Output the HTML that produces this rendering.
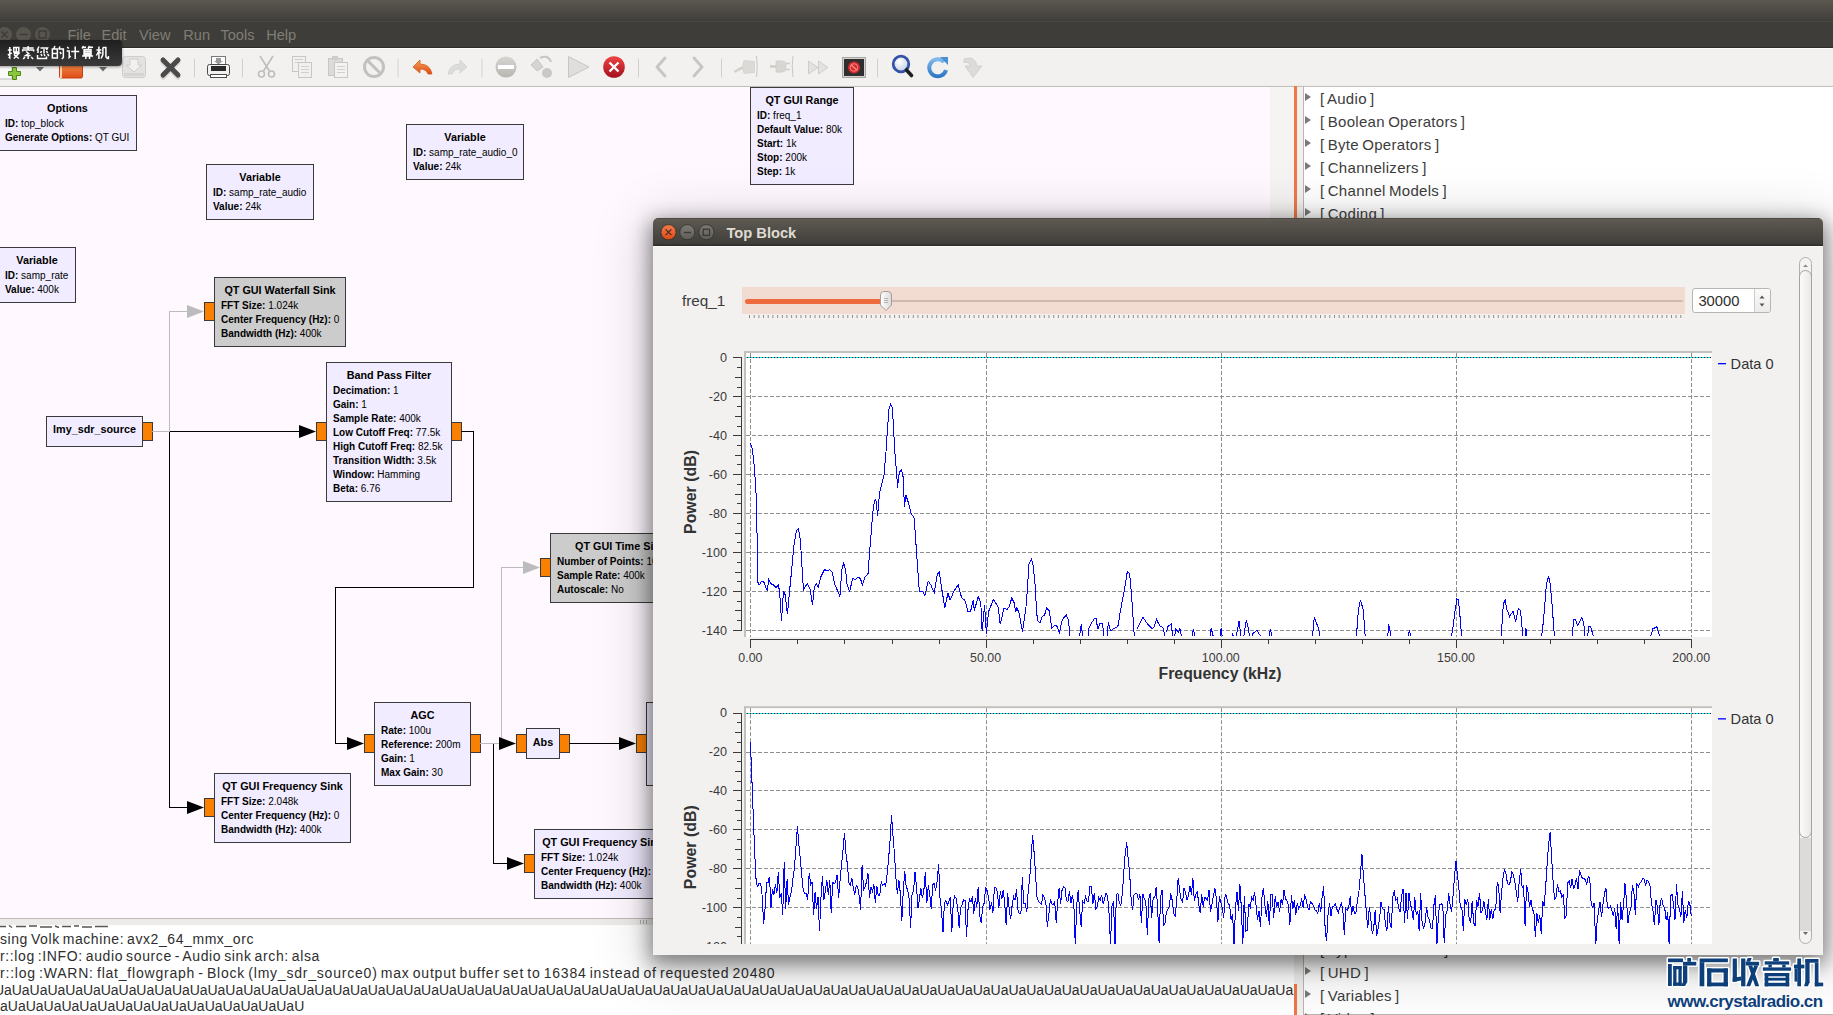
<!DOCTYPE html>
<html><head><meta charset="utf-8"><title>GRC</title>
<style>
*{box-sizing:border-box;margin:0;padding:0}
html,body{width:1833px;height:1015px;overflow:hidden;background:#f2f1f0;font-family:"Liberation Sans",sans-serif}
.a{position:absolute}
.blk{position:absolute;border:1px solid #3a3a3a;background:#f1ecff;color:#000}
.blk.dis{background:#cccccc}
.blk .t{position:absolute;left:0;right:0;text-align:center;font-weight:bold;font-size:10.8px;white-space:nowrap}
.blk .p{position:absolute;left:6px;font-size:10px;white-space:nowrap}
.blk .p b{font-weight:bold}
.port{position:absolute;background:#f98000;border:1px solid #3a3a3a;width:11px;height:19px}
.menu{position:absolute;top:26.8px;font-size:14.6px;color:#807d76;white-space:nowrap}
.tree{position:absolute;left:1320px;font-size:15px;letter-spacing:0.3px;word-spacing:-1.2px;color:#3c3c3c;white-space:nowrap}
.tri{position:absolute;left:1305px;width:0;height:0;border-top:4.5px solid transparent;border-bottom:4.5px solid transparent;border-left:6.5px solid #7a7a7a}
.log{position:absolute;font-size:14px;color:#2e2e2e;white-space:nowrap;letter-spacing:0.5px;word-spacing:-1.5px}
</style></head><body>

<div class="a" style="left:0;top:0;width:1833px;height:21px;background:linear-gradient(#5b5750,#403e3a)"></div>
<div class="a" style="left:0;top:21px;width:1833px;height:1px;background:#4b4945"></div>
<div class="a" style="left:0;top:22px;width:1833px;height:25px;background:#3e3d39"></div>
<div class="a" style="left:0;top:47px;width:1833px;height:1px;background:#2e2c29"></div>
<div class="a" style="left:-3.0px;top:27px;width:15px;height:15px;border-radius:50%;background:#57544e"></div>
<div class="a" style="left:16.0px;top:27px;width:15px;height:15px;border-radius:50%;background:#57544e"></div>
<div class="a" style="left:35.0px;top:27px;width:15px;height:15px;border-radius:50%;background:#57544e"></div>
<svg class="a" style="left:0;top:26px" width="60" height="18"><g stroke="#3a3834" stroke-width="1.3" fill="none"><path d="M1.5 5.5 L7.5 11.5 M7.5 5.5 L1.5 11.5"/><path d="M19.5 8.5 H27.5"/><rect x="39" y="5" width="7" height="7"/></g></svg>
<div class="menu" style="left:67.4px">File</div>
<div class="menu" style="left:101.5px">Edit</div>
<div class="menu" style="left:139.1px">View</div>
<div class="menu" style="left:183.3px">Run</div>
<div class="menu" style="left:220.4px">Tools</div>
<div class="menu" style="left:266.2px">Help</div>
<div class="a" style="left:0;top:48px;width:1833px;height:38px;background:linear-gradient(#fbfbfa 0px,#fbfbfa 1px,#f2f1f0 1px,#f2f1f0 37px,#eae9e7 38px)"></div>
<div class="a" style="left:0;top:86px;width:1833px;height:1px;background:#c3c0bb"></div>
<svg class="a" style="left:0;top:0" width="1000" height="87" viewBox="0 0 1000 87">
<defs>
<linearGradient id="gOr" x1="0" y1="0" x2="0" y2="1"><stop offset="0" stop-color="#f5a25a"/><stop offset="1" stop-color="#df4a17"/></linearGradient>
<linearGradient id="gRed" x1="0" y1="0" x2="0" y2="1"><stop offset="0" stop-color="#ef4444"/><stop offset="1" stop-color="#a3101c"/></linearGradient>
<linearGradient id="gGr" x1="0" y1="0" x2="0" y2="1"><stop offset="0" stop-color="#d7d5d2"/><stop offset="1" stop-color="#b9b6b2"/></linearGradient>
<linearGradient id="gBl" x1="0" y1="0" x2="0" y2="1"><stop offset="0" stop-color="#7fb8ea"/><stop offset="1" stop-color="#2f78c8"/></linearGradient>
<radialGradient id="gMag" cx="0.4" cy="0.35" r="0.6"><stop offset="0" stop-color="#ffffff"/><stop offset="1" stop-color="#c9d4e6"/></radialGradient>
</defs>
<rect x="194" y="59" width="1" height="18" fill="#d3d0cc"/>
<rect x="242" y="59" width="1" height="18" fill="#d3d0cc"/>
<rect x="397.5" y="59" width="1" height="18" fill="#d3d0cc"/>
<rect x="481.5" y="59" width="1" height="18" fill="#d3d0cc"/>
<rect x="638" y="59" width="1" height="18" fill="#d3d0cc"/>
<rect x="721" y="59" width="1" height="18" fill="#d3d0cc"/>
<rect x="877" y="59" width="1" height="18" fill="#d3d0cc"/>
<rect x="-4" y="60" width="16" height="19" fill="#fafafa" stroke="#bdbdbd" stroke-width="1"/>
<path d="M12.5 67.5 h4 v4 h4 v4 h-4 v4 h-4 v-4 h-4 v-4 h4z" fill="#8cc63e" stroke="#4e8a16" stroke-width="1"/>
<path d="M36 67 h8 l-4 4.5z" fill="#6b6b6b"/>
<path d="M99 67 h8 l-4 4.5z" fill="#6b6b6b"/>
<rect x="59.5" y="58" width="23" height="20" rx="1.5" fill="url(#gOr)" stroke="#c8400e" stroke-width="1"/>
<rect x="60" y="58" width="2" height="20" fill="#f7d0b0"/>
<rect x="122.5" y="56.5" width="23" height="21" rx="3" fill="#e3e2e0" stroke="#cfcdca"/>
<path d="M130 59 h8 v6 h4 l-8 7 l-8 -7 h4z" fill="#f2f1ef" stroke="#cfcdca"/>
<rect x="124" y="73" width="20" height="3" fill="#d6d4d1"/>
<path d="M163 61 L178 76 M178 61 L163 76" stroke="#b8b6b3" stroke-width="5" stroke-linecap="round" transform="translate(0 1)" opacity="0.5"/><path d="M163 60 L178 75 M178 60 L163 75" stroke="#4a4a4a" stroke-width="5" stroke-linecap="round"/>
<rect x="211.5" y="56.5" width="14" height="9" fill="#fff" stroke="#7a7a7a"/>
<path d="M216 58 h5 v3 h2 l-4.5 3.5 l-4.5 -3.5 h2z" fill="#9a9a9a"/>
<rect x="207.5" y="64.5" width="22" height="11" rx="2" fill="#f0f0f0" stroke="#4a4a4a"/>
<rect x="211" y="66" width="15" height="5" fill="#2a2a2a"/>
<rect x="210.5" y="74.5" width="16" height="3" fill="#fff" stroke="#4a4a4a"/>
<g stroke="#bfbdbb" stroke-width="1.6" fill="none"><path d="M260 56 L270 72 M273 56 L263 72"/><circle cx="261.5" cy="74" r="3"/><circle cx="271.5" cy="74" r="3"/></g>
<g fill="#f1f0ef" stroke="#c9c7c4"><rect x="292.5" y="56.5" width="13" height="15"/><rect x="298.5" y="62.5" width="13" height="15"/></g>
<g stroke="#d2d0cd"><path d="M301 66.5h8M301 69.5h8M301 72.5h8M295 59.5h8M295 62.5h3"/></g>
<rect x="328.5" y="58.5" width="14" height="17" fill="#dddbd9" stroke="#c9c7c4"/>
<rect x="332" y="56" width="6" height="4" fill="#cfcdca"/>
<rect x="334.5" y="62.5" width="13" height="15" fill="#f3f2f1" stroke="#c9c7c4"/>
<g stroke="#d2d0cd"><path d="M337 66.5h8M337 69.5h8M337 72.5h8"/></g>
<circle cx="374" cy="67" r="9.5" fill="none" stroke="#c3c1bf" stroke-width="3"/>
<path d="M368 61 L380 73" stroke="#c3c1bf" stroke-width="3"/>
<path d="M413 67 L420 60 L420 64 Q430 64 432 74 L428 74 Q426 69 420 69 L420 73z" fill="url(#gOr)" stroke="#d45a18" stroke-width="0.8"/>
<path d="M467 67 L460 60 L460 64 Q450 64 448 74 L452 74 Q454 69 460 69 L460 73z" fill="#dcdcda" stroke="#cfcfcd" stroke-width="0.8"/>
<circle cx="506" cy="67" r="10.5" fill="url(#gGr)"/>
<rect x="498" y="65" width="16" height="4" fill="#fff"/>
<path d="M531 65 L537 59 L543 67 L537 71z" fill="#d6d4d2" stroke="#c2c0bd" stroke-width="0.8"/>
<path d="M540 58 Q548 54 551 62" fill="none" stroke="#c7c5c2" stroke-width="2"/>
<circle cx="547" cy="73" r="5" fill="#cac8c5"/>
<path d="M568.5 56.5 L589 67 L568.5 77.5z" fill="#dfdedc" stroke="#c8c6c3"/>
<circle cx="614" cy="67" r="10.8" fill="url(#gRed)"/>
<path d="M609.5 62.5 L618.5 71.5 M618.5 62.5 L609.5 71.5" stroke="#fff" stroke-width="2.4"/>
<path d="M665 58 L657 67 L665 76" fill="none" stroke="#c8c6c3" stroke-width="3" stroke-linecap="round" stroke-linejoin="round"/>
<path d="M694 58 L702 67 L694 76" fill="none" stroke="#c8c6c3" stroke-width="3" stroke-linecap="round" stroke-linejoin="round"/>
<path d="M734.5 72 Q740 68 745 67" fill="none" stroke="#d3d1ce" stroke-width="2.6"/>
<path d="M744 60.5 Q751 61 754.5 61.5 V72.5 Q751 73 744 73.5 Q741 67 744 60.5z" fill="#dcdad7" stroke="#cfcdca" stroke-width="0.6"/>
<path d="M756.5 56 Q758 66.5 756.5 77" fill="none" stroke="#c9c7c4" stroke-width="1"/>
<path d="M770 66.5 h6" stroke="#cfcdca" stroke-width="2.6"/>
<path d="M776 61 Q784 60 786 63 V70 Q784 73 776 72z" fill="#d8d6d3" stroke="#cbc9c6" stroke-width="0.6"/>
<path d="M786 63.5h4 M786 69.5h4" stroke="#cfcdca" stroke-width="1.6"/>
<path d="M793 56 Q791.5 66.5 793 77" fill="none" stroke="#c9c7c4" stroke-width="1"/>
<path d="M808.5 61 L818 67.5 L808.5 74z M818.5 61 L828 67.5 L818.5 74z" fill="#e3e2e0" stroke="#cfcdca"/>
<rect x="842.5" y="57.5" width="23" height="20" fill="#d6d4d1" stroke="#a9a7a4"/>
<rect x="844" y="59" width="20" height="17" fill="#2f2f2f"/>
<circle cx="854" cy="67.5" r="6" fill="#d42a2a"/>
<circle cx="854" cy="67.5" r="3.8" fill="none" stroke="#ff9a9a" stroke-width="0.8"/>
<path d="M851.3 64.8 L856.7 70.2" stroke="#ff9a9a" stroke-width="1.2"/>
<circle cx="901" cy="64" r="7.8" fill="url(#gMag)" stroke="#3453a8" stroke-width="2.8"/>
<path d="M906.5 70 L911.5 75.5" stroke="#1e1e1e" stroke-width="3.6" stroke-linecap="round"/>
<path d="M944 62 A8.5 8.5 0 1 0 946 70" fill="none" stroke="url(#gBl)" stroke-width="4"/>
<path d="M940 57 L948 57 L948 65z" fill="#4a8fd6"/>
<path d="M964 59 Q975 55 977 66 L982 66 L973 77.5 L965 66 L970 66 Q969 61 964 62.5z" fill="#dcdbd9" stroke="#cfcdca" stroke-width="0.8"/>
</svg>
<div class="a" style="left:0;top:87px;width:1270px;height:831px;background:#fff9ff;overflow:hidden" id="cv">
<div class="a" style="left:0;top:-87px;width:1270px;height:1015px">
<div class="blk" style="left:-2px;top:95px;width:139px;height:56px"><div class="t" style="top:6.56px;line-height:10.8px">Options</div><div class="p" style="top:23.33px;line-height:10px"><b>ID:</b> top_block</div><div class="p" style="top:37.26px;line-height:10px"><b>Generate Options:</b> QT GUI</div></div>
<div class="blk" style="left:206px;top:164px;width:108px;height:56px"><div class="t" style="top:6.56px;line-height:10.8px">Variable</div><div class="p" style="top:23.33px;line-height:10px"><b>ID:</b> samp_rate_audio</div><div class="p" style="top:37.26px;line-height:10px"><b>Value:</b> 24k</div></div>
<div class="blk" style="left:406px;top:124px;width:118px;height:56px"><div class="t" style="top:6.56px;line-height:10.8px">Variable</div><div class="p" style="top:23.33px;line-height:10px"><b>ID:</b> samp_rate_audio_0</div><div class="p" style="top:37.26px;line-height:10px"><b>Value:</b> 24k</div></div>
<div class="blk" style="left:750px;top:87px;width:104px;height:98px"><div class="t" style="top:6.56px;line-height:10.8px">QT GUI Range</div><div class="p" style="top:23.33px;line-height:10px"><b>ID:</b> freq_1</div><div class="p" style="top:37.26px;line-height:10px"><b>Default Value:</b> 80k</div><div class="p" style="top:51.19px;line-height:10px"><b>Start:</b> 1k</div><div class="p" style="top:65.12px;line-height:10px"><b>Stop:</b> 200k</div><div class="p" style="top:79.05px;line-height:10px"><b>Step:</b> 1k</div></div>
<div class="blk" style="left:-2px;top:247px;width:78px;height:56px"><div class="t" style="top:6.56px;line-height:10.8px">Variable</div><div class="p" style="top:23.33px;line-height:10px"><b>ID:</b> samp_rate</div><div class="p" style="top:37.26px;line-height:10px"><b>Value:</b> 400k</div></div>
<div class="blk dis" style="left:214px;top:277px;width:132px;height:70px"><div class="t" style="top:6.56px;line-height:10.8px">QT GUI Waterfall Sink</div><div class="p" style="top:23.33px;line-height:10px"><b>FFT Size:</b> 1.024k</div><div class="p" style="top:37.26px;line-height:10px"><b>Center Frequency (Hz):</b> 0</div><div class="p" style="top:51.19px;line-height:10px"><b>Bandwidth (Hz):</b> 400k</div></div>
<div class="port" style="left:204px;top:302px"></div>
<div class="blk" style="left:46px;top:416px;width:97px;height:31px"><div class="t" style="top:7.46px;line-height:10.8px">lmy_sdr_source</div></div>
<div class="port" style="left:142px;top:422px"></div>
<div class="blk" style="left:326px;top:362px;width:126px;height:140px"><div class="t" style="top:6.56px;line-height:10.8px">Band Pass Filter</div><div class="p" style="top:23.33px;line-height:10px"><b>Decimation:</b> 1</div><div class="p" style="top:37.26px;line-height:10px"><b>Gain:</b> 1</div><div class="p" style="top:51.19px;line-height:10px"><b>Sample Rate:</b> 400k</div><div class="p" style="top:65.12px;line-height:10px"><b>Low Cutoff Freq:</b> 77.5k</div><div class="p" style="top:79.05px;line-height:10px"><b>High Cutoff Freq:</b> 82.5k</div><div class="p" style="top:92.98px;line-height:10px"><b>Transition Width:</b> 3.5k</div><div class="p" style="top:106.91px;line-height:10px"><b>Window:</b> Hamming</div><div class="p" style="top:120.84px;line-height:10px"><b>Beta:</b> 6.76</div></div>
<div class="port" style="left:316px;top:422px"></div>
<div class="port" style="left:451px;top:422px"></div>
<div class="blk dis" style="left:550px;top:533px;width:141px;height:70px"><div class="t" style="top:6.56px;line-height:10.8px">QT GUI Time Sink</div><div class="p" style="top:23.33px;line-height:10px"><b>Number of Points:</b> 1024</div><div class="p" style="top:37.26px;line-height:10px"><b>Sample Rate:</b> 400k</div><div class="p" style="top:51.19px;line-height:10px"><b>Autoscale:</b> No</div></div>
<div class="port" style="left:540px;top:558px"></div>
<div class="blk" style="left:374px;top:702px;width:97px;height:84px"><div class="t" style="top:6.56px;line-height:10.8px">AGC</div><div class="p" style="top:23.33px;line-height:10px"><b>Rate:</b> 100u</div><div class="p" style="top:37.26px;line-height:10px"><b>Reference:</b> 200m</div><div class="p" style="top:51.19px;line-height:10px"><b>Gain:</b> 1</div><div class="p" style="top:65.12px;line-height:10px"><b>Max Gain:</b> 30</div></div>
<div class="port" style="left:364px;top:734px"></div>
<div class="port" style="left:470px;top:734px"></div>
<div class="blk" style="left:526px;top:728px;width:34px;height:31px"><div class="t" style="top:7.56px;line-height:10.8px">Abs</div></div>
<div class="port" style="left:516px;top:734px"></div>
<div class="port" style="left:559px;top:734px"></div>
<div class="blk" style="left:214px;top:773px;width:137px;height:70px"><div class="t" style="top:6.56px;line-height:10.8px">QT GUI Frequency Sink</div><div class="p" style="top:23.33px;line-height:10px"><b>FFT Size:</b> 2.048k</div><div class="p" style="top:37.26px;line-height:10px"><b>Center Frequency (Hz):</b> 0</div><div class="p" style="top:51.19px;line-height:10px"><b>Bandwidth (Hz):</b> 400k</div></div>
<div class="port" style="left:204px;top:798px"></div>
<div class="blk" style="left:534px;top:829px;width:137px;height:70px"><div class="t" style="top:6.56px;line-height:10.8px">QT GUI Frequency Sink</div><div class="p" style="top:23.33px;line-height:10px"><b>FFT Size:</b> 1.024k</div><div class="p" style="top:37.26px;line-height:10px"><b>Center Frequency (Hz):</b> 0</div><div class="p" style="top:51.19px;line-height:10px"><b>Bandwidth (Hz):</b> 400k</div></div>
<div class="port" style="left:524px;top:854px"></div>
<div class="blk" style="left:646px;top:702px;width:120px;height:84px"><div class="t" style="top:6.56px;line-height:10.8px">QT GUI Time Sink</div><div class="p" style="top:23.33px;line-height:10px"><b>Number of Points:</b> 1024</div></div>
<div class="port" style="left:636px;top:734px"></div>
<svg class="a" style="left:0;top:0" width="1270" height="1015"><g fill="none" stroke-width="1" shape-rendering="crispEdges"><path stroke="#000" d="M169.5 431.5 H300 M169.5 431.5 V807.5 H188 M461 431.5 H473.5 V587.5 H335.5 V743.5 H348 M480 743.5 H500 M493.5 743.5 V863.5 H508 M569 743.5 H620"/><path stroke="#bbbbbb" d="M152 431.5 H169.5 V311.5 H188 M480 743.5 H501.5 V567.5 H524"/></g><path d="M299 425.0 L316 431.5 L299 438.0z" fill="#000"/><path d="M187 801.0 L204 807.5 L187 814.0z" fill="#000"/><path d="M347 737.0 L364 743.5 L347 750.0z" fill="#000"/><path d="M499 737.0 L516 743.5 L499 750.0z" fill="#000"/><path d="M507 857.0 L524 863.5 L507 870.0z" fill="#000"/><path d="M619 737.0 L636 743.5 L619 750.0z" fill="#000"/><path d="M187 305.0 L204 311.5 L187 318.0z" fill="#bbbbbb"/><path d="M523 561.0 L540 567.5 L523 574.0z" fill="#bbbbbb"/></svg>
</div></div>
<div class="a" style="left:1270px;top:87px;width:24px;height:831px;background:#f5f4f3"></div>
<div class="a" style="left:1294px;top:86px;width:3px;height:140px;background:#f07746"></div>
<div class="a" style="left:1294px;top:984px;width:3px;height:31px;background:#f07746"></div>
<div class="a" style="left:0;top:918px;width:1294px;height:1px;background:#bdbab5"></div>
<div class="a" style="left:0;top:919px;width:1294px;height:6px;background:#ecebe9"></div>
<svg class="a" style="left:639px;top:919px" width="12" height="6"><path d="M1.5 1v4M4.5 1v4M7.5 1v4" stroke="#b5b2ad" stroke-width="1"/></svg>
<div class="a" style="left:0;top:925px;width:1294px;height:90px;background:#ffffff;overflow:hidden">
<svg class="a" style="left:0;top:0" width="120" height="4"><path d="M0 1.5h6 M9 0.5l3 2 M16 1.5h10 M29 1h8 M40 2h12 M55 1l4 1.5 M62 1.5h9 M74 1h5 M82 2h10 M95 1.5h13" stroke="#555" stroke-width="1.4"/></svg>
<div class="log" style="left:0px;top:6.55px;line-height:14px;letter-spacing:0.576px">sing Volk machine: avx2_64_mmx_orc</div>
<div class="log" style="left:0px;top:23.65px;line-height:14px;letter-spacing:0.617px">r::log :INFO: audio source - Audio sink arch: alsa</div>
<div class="log" style="left:0px;top:40.65px;line-height:14px;letter-spacing:0.787px">r::log :WARN: flat_flowgraph - Block (lmy_sdr_source0) max output buffer set to 16384 instead of requested 20480</div>
<div class="log" style="left:-6px;top:57.65px;line-height:14px;letter-spacing:-0.05px">UaUaUaUaUaUaUaUaUaUaUaUaUaUaUaUaUaUaUaUaUaUaUaUaUaUaUaUaUaUaUaUaUaUaUaUaUaUaUaUaUaUaUaUaUaUaUaUaUaUaUaUaUaUaUaUaUaUaUaUaUaUaUaUaUaUaUaUaUaUaUaUaUaUa</div>
<div class="log" style="left:0px;top:74.45px;line-height:14px;letter-spacing:0px">aUaUaUaUaUaUaUaUaUaUaUaUaUaUaUaUaU</div>
</div>
<div class="a" style="left:1303px;top:86px;width:530px;height:929px;background:#fff;border-left:1px solid #b9b6b0;border-top:1px solid #c3c0bb;border-bottom:1px solid #b9b6b0;overflow:hidden">
</div>
<div class="tree" style="top:91.30px;line-height:15px">[ Audio ]</div>
<div class="tri" style="top:93.0px"></div>
<div class="tree" style="top:114.30px;line-height:15px">[ Boolean Operators ]</div>
<div class="tri" style="top:116.0px"></div>
<div class="tree" style="top:137.30px;line-height:15px">[ Byte Operators ]</div>
<div class="tri" style="top:139.0px"></div>
<div class="tree" style="top:160.30px;line-height:15px">[ Channelizers ]</div>
<div class="tri" style="top:162.0px"></div>
<div class="tree" style="top:183.30px;line-height:15px">[ Channel Models ]</div>
<div class="tri" style="top:185.0px"></div>
<div class="tree" style="top:206.30px;line-height:15px">[ Coding ]</div>
<div class="tri" style="top:208.0px"></div>
<div class="tree" style="top:942.30px;line-height:15px">[ Type Converters ]</div>
<div class="tri" style="top:944.0px"></div>
<div class="tree" style="top:965.30px;line-height:15px">[ UHD ]</div>
<div class="tri" style="top:967.0px"></div>
<div class="tree" style="top:988.30px;line-height:15px">[ Variables ]</div>
<div class="tri" style="top:990.0px"></div>
<div class="tree" style="top:1011.30px;line-height:15px">[ Video ]</div>
<div class="tri" style="top:1013.0px"></div>
<div class="a" style="left:653px;top:218px;width:1170px;height:737px;border-radius:5px 5px 0 0;background:#f2f1f0;box-shadow:0 6px 20px 3px rgba(0,0,0,0.45),0 10px 56px 8px rgba(0,0,0,0.16)"></div>
<div class="a" style="left:653px;top:218px;width:1170px;height:28px;border-radius:5px 5px 0 0;background:linear-gradient(#4c4942 0px,#4c4942 1px,#625e55 1px,#5b5750 3px,#403e3a 26px,#2f2d29 27px,#2f2d29 28px)"></div>
<svg class="a" style="left:653px;top:218px" width="80" height="28"><defs><linearGradient id="wc" x1="0" y1="0" x2="0" y2="1"><stop offset="0" stop-color="#f37b4b"/><stop offset="1" stop-color="#dc4a16"/></linearGradient><linearGradient id="wg" x1="0" y1="0" x2="0" y2="1"><stop offset="0" stop-color="#7c7a74"/><stop offset="1" stop-color="#5e5c57"/></linearGradient></defs><circle cx="15.5" cy="14.2" r="7.6" fill="url(#wc)" stroke="#2f2d2a" stroke-width="0.8"/><circle cx="34.3" cy="14.2" r="7.6" fill="url(#wg)" stroke="#2f2d2a" stroke-width="0.8"/><circle cx="53.4" cy="14.2" r="7.6" fill="url(#wg)" stroke="#2f2d2a" stroke-width="0.8"/><path d="M12.6 11.3 L18.4 17.1 M18.4 11.3 L12.6 17.1" stroke="#3a2a20" stroke-width="1.1"/><path d="M30.8 14.5 H37.8" stroke="#3a3935" stroke-width="1.3"/><rect x="50.2" y="11.2" width="6.4" height="6.2" fill="none" stroke="#3a3935" stroke-width="1.3"/></svg>
<div class="a" style="left:653px;top:246px;width:1170px;height:1px;background:#fbfbfa"></div>
<div class="a" style="left:726.4px;top:225.7px;font-size:14.7px;line-height:15px;font-weight:bold;color:#dfdbd2;white-space:nowrap">Top Block</div>
<div class="a" style="left:682px;top:292.5px;font-size:15.3px;line-height:15px;color:#3c3c3c">freq_1</div>
<div class="a" style="left:742px;top:287px;width:943px;height:27px;background:#f2dcd1"></div>
<div class="a" style="left:745px;top:300px;width:938px;height:2px;border-radius:1px;background:#cfb8ad"></div>
<div class="a" style="left:745px;top:298.5px;width:140px;height:5px;border-radius:3px;background:#ec6a3c"></div>
<svg class="a" style="left:878px;top:290px" width="16" height="22"><defs><linearGradient id="hd" x1="0" y1="0" x2="1" y2="0"><stop offset="0" stop-color="#ffffff"/><stop offset="1" stop-color="#dcdad7"/></linearGradient></defs><path d="M2.5 5 Q2.5 1.5 6 1.5 H10 Q13.5 1.5 13.5 5 V15 L8 20.5 L2.5 15z" fill="url(#hd)" stroke="#a29f9a" stroke-width="1"/><path d="M6 8.5h4M6 10.5h4M6 12.5h4" stroke="#a6a3a0" stroke-width="0.8"/></svg>
<svg class="a" style="left:0;top:315px" width="1700" height="4"><rect x="749.0" y="0" width="1" height="3" fill="#8f8d8a"/><rect x="753.7" y="0" width="1" height="3" fill="#8f8d8a"/><rect x="758.4" y="0" width="1" height="3" fill="#8f8d8a"/><rect x="763.0" y="0" width="1" height="3" fill="#8f8d8a"/><rect x="767.7" y="0" width="1" height="3" fill="#8f8d8a"/><rect x="772.4" y="0" width="1" height="3" fill="#8f8d8a"/><rect x="777.1" y="0" width="1" height="3" fill="#8f8d8a"/><rect x="781.8" y="0" width="1" height="3" fill="#8f8d8a"/><rect x="786.4" y="0" width="1" height="3" fill="#8f8d8a"/><rect x="791.1" y="0" width="1" height="3" fill="#8f8d8a"/><rect x="795.8" y="0" width="1" height="3" fill="#8f8d8a"/><rect x="800.5" y="0" width="1" height="3" fill="#8f8d8a"/><rect x="805.2" y="0" width="1" height="3" fill="#8f8d8a"/><rect x="809.8" y="0" width="1" height="3" fill="#8f8d8a"/><rect x="814.5" y="0" width="1" height="3" fill="#8f8d8a"/><rect x="819.2" y="0" width="1" height="3" fill="#8f8d8a"/><rect x="823.9" y="0" width="1" height="3" fill="#8f8d8a"/><rect x="828.6" y="0" width="1" height="3" fill="#8f8d8a"/><rect x="833.2" y="0" width="1" height="3" fill="#8f8d8a"/><rect x="837.9" y="0" width="1" height="3" fill="#8f8d8a"/><rect x="842.6" y="0" width="1" height="3" fill="#8f8d8a"/><rect x="847.3" y="0" width="1" height="3" fill="#8f8d8a"/><rect x="852.0" y="0" width="1" height="3" fill="#8f8d8a"/><rect x="856.6" y="0" width="1" height="3" fill="#8f8d8a"/><rect x="861.3" y="0" width="1" height="3" fill="#8f8d8a"/><rect x="866.0" y="0" width="1" height="3" fill="#8f8d8a"/><rect x="870.7" y="0" width="1" height="3" fill="#8f8d8a"/><rect x="875.4" y="0" width="1" height="3" fill="#8f8d8a"/><rect x="880.0" y="0" width="1" height="3" fill="#8f8d8a"/><rect x="884.7" y="0" width="1" height="3" fill="#8f8d8a"/><rect x="889.4" y="0" width="1" height="3" fill="#8f8d8a"/><rect x="894.1" y="0" width="1" height="3" fill="#8f8d8a"/><rect x="898.8" y="0" width="1" height="3" fill="#8f8d8a"/><rect x="903.4" y="0" width="1" height="3" fill="#8f8d8a"/><rect x="908.1" y="0" width="1" height="3" fill="#8f8d8a"/><rect x="912.8" y="0" width="1" height="3" fill="#8f8d8a"/><rect x="917.5" y="0" width="1" height="3" fill="#8f8d8a"/><rect x="922.2" y="0" width="1" height="3" fill="#8f8d8a"/><rect x="926.8" y="0" width="1" height="3" fill="#8f8d8a"/><rect x="931.5" y="0" width="1" height="3" fill="#8f8d8a"/><rect x="936.2" y="0" width="1" height="3" fill="#8f8d8a"/><rect x="940.9" y="0" width="1" height="3" fill="#8f8d8a"/><rect x="945.6" y="0" width="1" height="3" fill="#8f8d8a"/><rect x="950.2" y="0" width="1" height="3" fill="#8f8d8a"/><rect x="954.9" y="0" width="1" height="3" fill="#8f8d8a"/><rect x="959.6" y="0" width="1" height="3" fill="#8f8d8a"/><rect x="964.3" y="0" width="1" height="3" fill="#8f8d8a"/><rect x="969.0" y="0" width="1" height="3" fill="#8f8d8a"/><rect x="973.6" y="0" width="1" height="3" fill="#8f8d8a"/><rect x="978.3" y="0" width="1" height="3" fill="#8f8d8a"/><rect x="983.0" y="0" width="1" height="3" fill="#8f8d8a"/><rect x="987.7" y="0" width="1" height="3" fill="#8f8d8a"/><rect x="992.4" y="0" width="1" height="3" fill="#8f8d8a"/><rect x="997.0" y="0" width="1" height="3" fill="#8f8d8a"/><rect x="1001.7" y="0" width="1" height="3" fill="#8f8d8a"/><rect x="1006.4" y="0" width="1" height="3" fill="#8f8d8a"/><rect x="1011.1" y="0" width="1" height="3" fill="#8f8d8a"/><rect x="1015.8" y="0" width="1" height="3" fill="#8f8d8a"/><rect x="1020.4" y="0" width="1" height="3" fill="#8f8d8a"/><rect x="1025.1" y="0" width="1" height="3" fill="#8f8d8a"/><rect x="1029.8" y="0" width="1" height="3" fill="#8f8d8a"/><rect x="1034.5" y="0" width="1" height="3" fill="#8f8d8a"/><rect x="1039.2" y="0" width="1" height="3" fill="#8f8d8a"/><rect x="1043.8" y="0" width="1" height="3" fill="#8f8d8a"/><rect x="1048.5" y="0" width="1" height="3" fill="#8f8d8a"/><rect x="1053.2" y="0" width="1" height="3" fill="#8f8d8a"/><rect x="1057.9" y="0" width="1" height="3" fill="#8f8d8a"/><rect x="1062.6" y="0" width="1" height="3" fill="#8f8d8a"/><rect x="1067.2" y="0" width="1" height="3" fill="#8f8d8a"/><rect x="1071.9" y="0" width="1" height="3" fill="#8f8d8a"/><rect x="1076.6" y="0" width="1" height="3" fill="#8f8d8a"/><rect x="1081.3" y="0" width="1" height="3" fill="#8f8d8a"/><rect x="1086.0" y="0" width="1" height="3" fill="#8f8d8a"/><rect x="1090.6" y="0" width="1" height="3" fill="#8f8d8a"/><rect x="1095.3" y="0" width="1" height="3" fill="#8f8d8a"/><rect x="1100.0" y="0" width="1" height="3" fill="#8f8d8a"/><rect x="1104.7" y="0" width="1" height="3" fill="#8f8d8a"/><rect x="1109.4" y="0" width="1" height="3" fill="#8f8d8a"/><rect x="1114.0" y="0" width="1" height="3" fill="#8f8d8a"/><rect x="1118.7" y="0" width="1" height="3" fill="#8f8d8a"/><rect x="1123.4" y="0" width="1" height="3" fill="#8f8d8a"/><rect x="1128.1" y="0" width="1" height="3" fill="#8f8d8a"/><rect x="1132.8" y="0" width="1" height="3" fill="#8f8d8a"/><rect x="1137.4" y="0" width="1" height="3" fill="#8f8d8a"/><rect x="1142.1" y="0" width="1" height="3" fill="#8f8d8a"/><rect x="1146.8" y="0" width="1" height="3" fill="#8f8d8a"/><rect x="1151.5" y="0" width="1" height="3" fill="#8f8d8a"/><rect x="1156.2" y="0" width="1" height="3" fill="#8f8d8a"/><rect x="1160.8" y="0" width="1" height="3" fill="#8f8d8a"/><rect x="1165.5" y="0" width="1" height="3" fill="#8f8d8a"/><rect x="1170.2" y="0" width="1" height="3" fill="#8f8d8a"/><rect x="1174.9" y="0" width="1" height="3" fill="#8f8d8a"/><rect x="1179.6" y="0" width="1" height="3" fill="#8f8d8a"/><rect x="1184.2" y="0" width="1" height="3" fill="#8f8d8a"/><rect x="1188.9" y="0" width="1" height="3" fill="#8f8d8a"/><rect x="1193.6" y="0" width="1" height="3" fill="#8f8d8a"/><rect x="1198.3" y="0" width="1" height="3" fill="#8f8d8a"/><rect x="1203.0" y="0" width="1" height="3" fill="#8f8d8a"/><rect x="1207.6" y="0" width="1" height="3" fill="#8f8d8a"/><rect x="1212.3" y="0" width="1" height="3" fill="#8f8d8a"/><rect x="1217.0" y="0" width="1" height="3" fill="#8f8d8a"/><rect x="1221.7" y="0" width="1" height="3" fill="#8f8d8a"/><rect x="1226.4" y="0" width="1" height="3" fill="#8f8d8a"/><rect x="1231.0" y="0" width="1" height="3" fill="#8f8d8a"/><rect x="1235.7" y="0" width="1" height="3" fill="#8f8d8a"/><rect x="1240.4" y="0" width="1" height="3" fill="#8f8d8a"/><rect x="1245.1" y="0" width="1" height="3" fill="#8f8d8a"/><rect x="1249.8" y="0" width="1" height="3" fill="#8f8d8a"/><rect x="1254.4" y="0" width="1" height="3" fill="#8f8d8a"/><rect x="1259.1" y="0" width="1" height="3" fill="#8f8d8a"/><rect x="1263.8" y="0" width="1" height="3" fill="#8f8d8a"/><rect x="1268.5" y="0" width="1" height="3" fill="#8f8d8a"/><rect x="1273.2" y="0" width="1" height="3" fill="#8f8d8a"/><rect x="1277.8" y="0" width="1" height="3" fill="#8f8d8a"/><rect x="1282.5" y="0" width="1" height="3" fill="#8f8d8a"/><rect x="1287.2" y="0" width="1" height="3" fill="#8f8d8a"/><rect x="1291.9" y="0" width="1" height="3" fill="#8f8d8a"/><rect x="1296.6" y="0" width="1" height="3" fill="#8f8d8a"/><rect x="1301.2" y="0" width="1" height="3" fill="#8f8d8a"/><rect x="1305.9" y="0" width="1" height="3" fill="#8f8d8a"/><rect x="1310.6" y="0" width="1" height="3" fill="#8f8d8a"/><rect x="1315.3" y="0" width="1" height="3" fill="#8f8d8a"/><rect x="1320.0" y="0" width="1" height="3" fill="#8f8d8a"/><rect x="1324.6" y="0" width="1" height="3" fill="#8f8d8a"/><rect x="1329.3" y="0" width="1" height="3" fill="#8f8d8a"/><rect x="1334.0" y="0" width="1" height="3" fill="#8f8d8a"/><rect x="1338.7" y="0" width="1" height="3" fill="#8f8d8a"/><rect x="1343.4" y="0" width="1" height="3" fill="#8f8d8a"/><rect x="1348.0" y="0" width="1" height="3" fill="#8f8d8a"/><rect x="1352.7" y="0" width="1" height="3" fill="#8f8d8a"/><rect x="1357.4" y="0" width="1" height="3" fill="#8f8d8a"/><rect x="1362.1" y="0" width="1" height="3" fill="#8f8d8a"/><rect x="1366.8" y="0" width="1" height="3" fill="#8f8d8a"/><rect x="1371.4" y="0" width="1" height="3" fill="#8f8d8a"/><rect x="1376.1" y="0" width="1" height="3" fill="#8f8d8a"/><rect x="1380.8" y="0" width="1" height="3" fill="#8f8d8a"/><rect x="1385.5" y="0" width="1" height="3" fill="#8f8d8a"/><rect x="1390.2" y="0" width="1" height="3" fill="#8f8d8a"/><rect x="1394.8" y="0" width="1" height="3" fill="#8f8d8a"/><rect x="1399.5" y="0" width="1" height="3" fill="#8f8d8a"/><rect x="1404.2" y="0" width="1" height="3" fill="#8f8d8a"/><rect x="1408.9" y="0" width="1" height="3" fill="#8f8d8a"/><rect x="1413.6" y="0" width="1" height="3" fill="#8f8d8a"/><rect x="1418.2" y="0" width="1" height="3" fill="#8f8d8a"/><rect x="1422.9" y="0" width="1" height="3" fill="#8f8d8a"/><rect x="1427.6" y="0" width="1" height="3" fill="#8f8d8a"/><rect x="1432.3" y="0" width="1" height="3" fill="#8f8d8a"/><rect x="1437.0" y="0" width="1" height="3" fill="#8f8d8a"/><rect x="1441.6" y="0" width="1" height="3" fill="#8f8d8a"/><rect x="1446.3" y="0" width="1" height="3" fill="#8f8d8a"/><rect x="1451.0" y="0" width="1" height="3" fill="#8f8d8a"/><rect x="1455.7" y="0" width="1" height="3" fill="#8f8d8a"/><rect x="1460.4" y="0" width="1" height="3" fill="#8f8d8a"/><rect x="1465.0" y="0" width="1" height="3" fill="#8f8d8a"/><rect x="1469.7" y="0" width="1" height="3" fill="#8f8d8a"/><rect x="1474.4" y="0" width="1" height="3" fill="#8f8d8a"/><rect x="1479.1" y="0" width="1" height="3" fill="#8f8d8a"/><rect x="1483.8" y="0" width="1" height="3" fill="#8f8d8a"/><rect x="1488.4" y="0" width="1" height="3" fill="#8f8d8a"/><rect x="1493.1" y="0" width="1" height="3" fill="#8f8d8a"/><rect x="1497.8" y="0" width="1" height="3" fill="#8f8d8a"/><rect x="1502.5" y="0" width="1" height="3" fill="#8f8d8a"/><rect x="1507.2" y="0" width="1" height="3" fill="#8f8d8a"/><rect x="1511.8" y="0" width="1" height="3" fill="#8f8d8a"/><rect x="1516.5" y="0" width="1" height="3" fill="#8f8d8a"/><rect x="1521.2" y="0" width="1" height="3" fill="#8f8d8a"/><rect x="1525.9" y="0" width="1" height="3" fill="#8f8d8a"/><rect x="1530.6" y="0" width="1" height="3" fill="#8f8d8a"/><rect x="1535.2" y="0" width="1" height="3" fill="#8f8d8a"/><rect x="1539.9" y="0" width="1" height="3" fill="#8f8d8a"/><rect x="1544.6" y="0" width="1" height="3" fill="#8f8d8a"/><rect x="1549.3" y="0" width="1" height="3" fill="#8f8d8a"/><rect x="1554.0" y="0" width="1" height="3" fill="#8f8d8a"/><rect x="1558.6" y="0" width="1" height="3" fill="#8f8d8a"/><rect x="1563.3" y="0" width="1" height="3" fill="#8f8d8a"/><rect x="1568.0" y="0" width="1" height="3" fill="#8f8d8a"/><rect x="1572.7" y="0" width="1" height="3" fill="#8f8d8a"/><rect x="1577.4" y="0" width="1" height="3" fill="#8f8d8a"/><rect x="1582.0" y="0" width="1" height="3" fill="#8f8d8a"/><rect x="1586.7" y="0" width="1" height="3" fill="#8f8d8a"/><rect x="1591.4" y="0" width="1" height="3" fill="#8f8d8a"/><rect x="1596.1" y="0" width="1" height="3" fill="#8f8d8a"/><rect x="1600.8" y="0" width="1" height="3" fill="#8f8d8a"/><rect x="1605.4" y="0" width="1" height="3" fill="#8f8d8a"/><rect x="1610.1" y="0" width="1" height="3" fill="#8f8d8a"/><rect x="1614.8" y="0" width="1" height="3" fill="#8f8d8a"/><rect x="1619.5" y="0" width="1" height="3" fill="#8f8d8a"/><rect x="1624.2" y="0" width="1" height="3" fill="#8f8d8a"/><rect x="1628.8" y="0" width="1" height="3" fill="#8f8d8a"/><rect x="1633.5" y="0" width="1" height="3" fill="#8f8d8a"/><rect x="1638.2" y="0" width="1" height="3" fill="#8f8d8a"/><rect x="1642.9" y="0" width="1" height="3" fill="#8f8d8a"/><rect x="1647.6" y="0" width="1" height="3" fill="#8f8d8a"/><rect x="1652.2" y="0" width="1" height="3" fill="#8f8d8a"/><rect x="1656.9" y="0" width="1" height="3" fill="#8f8d8a"/><rect x="1661.6" y="0" width="1" height="3" fill="#8f8d8a"/><rect x="1666.3" y="0" width="1" height="3" fill="#8f8d8a"/><rect x="1671.0" y="0" width="1" height="3" fill="#8f8d8a"/><rect x="1675.6" y="0" width="1" height="3" fill="#8f8d8a"/><rect x="1680.3" y="0" width="1" height="3" fill="#8f8d8a"/></svg>
<div class="a" style="left:1692px;top:288px;width:79px;height:25px;border:1px solid #b9b6b1;border-radius:3px;background:#fff"></div>
<div class="a" style="left:1754px;top:289px;width:16px;height:23px;border-left:1px solid #d0cdc8;background:linear-gradient(#fafafa,#ecebea);border-radius:0 2px 2px 0"></div>
<svg class="a" style="left:1756px;top:292px" width="12" height="18"><path d="M3.5 6.5 L6 3.5 L8.5 6.5z" fill="#555"/><path d="M3.5 11.5 L6 14.5 L8.5 11.5z" fill="#555"/></svg>
<div class="a" style="left:1698.4px;top:294.2px;font-size:14.8px;line-height:15px;color:#2e2e2e">30000</div>
<div class="a" style="left:1799px;top:257px;width:13px;height:687px;border:1px solid #b3b0ab;border-radius:7px;background:#f4f3f2"></div>
<div class="a" style="left:1800px;top:838px;width:11px;height:93px;background:#dcdbd9"></div>
<div class="a" style="left:1799px;top:270px;width:13px;height:568px;border:1px solid #a6a39e;border-radius:7px;background:linear-gradient(90deg,#fbfbfb,#e9e8e6)"></div>
<svg class="a" style="left:1799px;top:260px" width="13" height="684"><path d="M4 7 L6.5 4.5 L9 7z" fill="#8a8884"/><path d="M4 672 L6.5 675 L9 672z" fill="#6a6864"/></svg>
<svg class="a" style="left:653px;top:246px" width="1170" height="709" viewBox="653 246 1170 709"><rect x="744" y="351" width="968" height="286" fill="#ffffff"/><rect x="744" y="351" width="2" height="286" fill="#c2c0bc"/><rect x="744" y="351" width="968" height="2" fill="#c2c0bc"/><g stroke="#8e8e8e" stroke-width="1" stroke-dasharray="4 2" fill="none"><path d="M746 396.5 H1711"/><path d="M746 435.5 H1711"/><path d="M746 474.5 H1711"/><path d="M746 513.5 H1711"/><path d="M746 552.5 H1711"/><path d="M746 591.5 H1711"/><path d="M746 630.5 H1711"/><path d="M750.5 353 V637"/><path d="M986.5 353 V637"/><path d="M1221.5 353 V637"/><path d="M1456.5 353 V637"/><path d="M1691.5 353 V637"/></g><clipPath id="c1"><rect x="746" y="353" width="966" height="283"/></clipPath><path clip-path="url(#c1)" d="M750.2 442.8 L752.3 449.2 L754.1 464.5 L755.4 482.5 L756.6 503.0 L757.2 546.5 L757.9 582.4 L759.2 584.9 L761.8 581.1 L764.3 582.4 L765.6 587.5 L767.4 590.0 L768.7 579.8 L770.7 583.6 L773.3 584.9 L775.9 587.5 L778.4 584.9 L779.7 592.6 L781.5 620.8 L783.5 591.3 L785.3 595.2 L787.4 614.4 L789.4 592.6 L791.2 574.7 L793.8 546.5 L796.4 531.1 L798.4 528.6 L800.5 541.4 L801.5 559.3 L803.5 590.0 L807.1 583.6 L810.4 590.0 L812.5 605.4 L814.3 587.5 L816.3 583.6 L818.1 587.5 L820.7 577.2 L824.5 569.5 L827.1 570.8 L829.7 569.5 L832.2 572.1 L834.8 584.9 L837.3 590.0 L839.9 596.4 L841.9 569.5 L843.7 563.1 L845.5 569.5 L847.1 584.9 L849.6 591.3 L852.7 578.5 L855.3 579.8 L857.8 577.2 L860.4 578.5 L862.4 584.9 L865.0 577.2 L868.1 573.4 L869.4 554.2 L871.1 533.7 L872.7 513.2 L874.5 500.4 L875.8 499.1 L877.6 515.8 L879.6 492.7 L882.2 482.5 L884.0 474.8 L886.0 451.7 L887.3 431.2 L889.1 408.2 L890.6 404.3 L892.4 408.2 L893.7 431.2 L895.0 454.3 L896.8 474.8 L897.5 487.6 L899.3 472.2 L901.4 469.7 L903.2 477.3 L904.4 506.8 L906.0 495.3 L908.5 503.0 L911.1 513.2 L914.2 518.3 L916.7 554.2 L919.3 591.3 L922.4 591.3 L924.9 595.2 L928.3 581.1 L930.8 584.9 L934.2 592.6 L937.2 574.7 L939.3 572.1 L941.1 584.9 L944.9 608.0 L948.0 592.6 L950.0 600.3 L953.9 591.3 L958.2 584.9 L961.6 597.7 L964.9 600.3 L968.0 611.8 L970.5 611.8 L973.1 600.3 L974.4 610.5 L978.2 596.4 L980.8 602.8 L982.1 631.0 L984.6 605.4 L986.4 633.6 L988.5 611.8 L989.9 608.1 L993.4 599.6 L995.5 602.4 L998.4 608.1 L1000.2 624.4 L1004.0 608.1 L1006.9 609.5 L1009.0 606.7 L1011.8 598.2 L1014.0 602.4 L1015.7 612.3 L1016.8 608.1 L1018.9 612.3 L1022.5 631.5 L1026.0 606.7 L1027.4 589.6 L1028.9 564.1 L1031.4 559.1 L1033.1 565.5 L1035.2 585.4 L1036.7 613.8 L1038.1 621.6 L1040.2 622.3 L1042.3 616.6 L1044.5 615.2 L1046.6 608.1 L1049.4 610.9 L1051.6 627.9 L1055.1 625.1 L1057.2 626.5 L1059.4 633.6 L1061.5 622.3 L1063.6 618.0 L1066.5 615.2 L1068.6 620.9 L1070.0 639.3 M1079.2 639.3 L1081.3 623.7 L1082.8 639.3 M1087.7 639.3 L1089.1 627.2 L1092.0 622.3 L1094.8 618.0 L1096.2 618.7 L1097.7 629.4 L1099.8 623.7 L1102.6 623.7 L1104.0 639.3 M1106.9 639.3 L1108.3 622.3 L1110.4 630.8 L1117.5 626.5 L1118.2 625.1 L1120.4 610.9 L1123.9 592.5 L1127.4 571.2 L1129.6 573.3 L1131.7 596.7 L1134.5 639.3 M1136.7 629.4 L1143.0 617.3 L1147.3 623.7 L1152.3 628.7 L1154.4 626.5 L1156.5 619.4 L1160.1 626.5 L1162.9 627.2 L1165.7 639.3 M1166.5 632.2 L1167.9 626.5 L1171.4 623.7 L1172.8 639.3 M1174.3 639.3 L1175.7 628.7 L1178.5 632.2 L1179.9 628.7 L1182.1 639.3 M1191.3 639.3 L1193.4 629.4 L1195.5 639.3 M1209.7 639.3 L1211.1 627.9 L1214.0 639.3 M1219.6 639.3 L1221.1 627.9 L1222.5 639.3 M1232.1 639.4 L1232.8 633.0 L1233.5 639.4 M1235.6 639.4 L1239.1 621.0 L1241.3 639.4 M1243.4 639.4 L1246.2 620.3 L1248.4 628.1 L1249.8 639.4 M1251.9 639.4 L1252.6 633.8 L1256.9 630.2 L1259.0 633.8 L1261.8 636.6 M1268.2 639.4 L1270.4 629.5 L1272.5 639.4 M1312.2 639.4 L1314.3 617.4 L1317.9 626.7 L1319.3 632.3 L1320.7 639.4 M1356.2 639.4 L1358.3 611.1 L1360.4 600.4 L1363.3 609.6 L1365.4 639.4 M1387.4 639.4 L1388.8 624.5 L1391.6 639.4 M1407.2 639.4 L1409.4 630.2 L1411.5 639.4 M1450.5 639.4 L1452.6 630.9 L1454.8 612.5 L1456.9 599.0 L1458.3 599.7 L1459.7 612.5 L1461.8 639.4 M1501.1 639.1 L1502.1 622.1 L1503.4 603.6 L1505.2 600.2 L1506.8 609.1 L1509.6 616.6 L1513.0 611.1 L1515.7 621.4 L1518.4 608.4 L1520.5 610.5 L1523.2 639.1 M1524.6 639.1 L1525.9 628.2 L1527.3 639.1 M1540.2 639.1 L1542.3 632.3 L1544.3 610.5 L1546.4 584.5 L1548.4 577.0 L1549.8 580.5 L1551.8 600.9 L1554.6 639.1 M1572.0 639.1 L1573.7 619.3 L1575.7 620.0 L1577.7 625.5 L1581.8 617.3 L1583.9 624.1 L1584.6 639.1 M1587.3 639.1 L1588.7 626.8 L1590.7 626.8 L1594.1 639.1 M1650.0 639.1 L1652.8 628.9 L1656.9 626.8 L1660.3 639.1" fill="none" stroke="#0000ff" stroke-width="1" stroke-linejoin="miter" shape-rendering="crispEdges"/><path d="M746 357.5 H1711" stroke="#00e8f0" stroke-width="1.2"/><path d="M747 357.5 H1711" stroke="#6a0000" stroke-width="1" stroke-dasharray="1 2"/><g stroke="#3a3a3a" stroke-width="1" fill="none" shape-rendering="crispEdges"><path d="M741.5 357.4 V629.91"/><path d="M732.5 357.5 H741.5"/><path d="M736.5 367.5 H741.5"/><path d="M734.5 377.5 H741.5"/><path d="M736.5 387.5 H741.5"/><path d="M732.5 396.5 H741.5"/><path d="M736.5 406.5 H741.5"/><path d="M734.5 416.5 H741.5"/><path d="M736.5 426.5 H741.5"/><path d="M732.5 435.5 H741.5"/><path d="M736.5 445.5 H741.5"/><path d="M734.5 455.5 H741.5"/><path d="M736.5 464.5 H741.5"/><path d="M732.5 474.5 H741.5"/><path d="M736.5 484.5 H741.5"/><path d="M734.5 494.5 H741.5"/><path d="M736.5 503.5 H741.5"/><path d="M732.5 513.5 H741.5"/><path d="M736.5 523.5 H741.5"/><path d="M734.5 533.5 H741.5"/><path d="M736.5 542.5 H741.5"/><path d="M732.5 552.5 H741.5"/><path d="M736.5 562.5 H741.5"/><path d="M734.5 572.5 H741.5"/><path d="M736.5 581.5 H741.5"/><path d="M732.5 591.5 H741.5"/><path d="M736.5 601.5 H741.5"/><path d="M734.5 610.5 H741.5"/><path d="M736.5 620.5 H741.5"/><path d="M732.5 630.5 H741.5"/></g><g font-family="Liberation Sans" font-size="12.6" fill="#3a3a3a" text-anchor="end"><text x="727" y="362.0">0</text><text x="727" y="400.9">-20</text><text x="727" y="439.9">-40</text><text x="727" y="478.8">-60</text><text x="727" y="517.7">-80</text><text x="727" y="556.6">-100</text><text x="727" y="595.6">-120</text><text x="727" y="634.5">-140</text></g><text x="0" y="0" transform="translate(696 492) rotate(-90)" font-family="Liberation Sans" font-weight="bold" font-size="15.9" fill="#333" text-anchor="middle">Power (dB)</text><g stroke="#3a3a3a" stroke-width="1" fill="none" shape-rendering="crispEdges"><path d="M750 639.5 H1692"/><path d="M750.5 640 V648"/><path d="M797.5 640 V644"/><path d="M844.5 640 V644"/><path d="M892.5 640 V644"/><path d="M939.5 640 V644"/><path d="M986.5 640 V648"/><path d="M1033.5 640 V644"/><path d="M1080.5 640 V644"/><path d="M1127.5 640 V644"/><path d="M1174.5 640 V644"/><path d="M1221.5 640 V648"/><path d="M1268.5 640 V644"/><path d="M1315.5 640 V644"/><path d="M1362.5 640 V644"/><path d="M1409.5 640 V644"/><path d="M1456.5 640 V648"/><path d="M1503.5 640 V644"/><path d="M1550.5 640 V644"/><path d="M1597.5 640 V644"/><path d="M1644.5 640 V644"/><path d="M1691.5 640 V648"/></g><g font-family="Liberation Sans" font-size="12.4" fill="#3a3a3a" text-anchor="middle"><text x="750.4" y="661.8">0.00</text><text x="985.6" y="661.8">50.00</text><text x="1220.8" y="661.8">100.00</text><text x="1456.0" y="661.8">150.00</text><text x="1691.2" y="661.8">200.00</text></g><text x="1220" y="678.6" font-family="Liberation Sans" font-weight="bold" font-size="15.8" fill="#333" text-anchor="middle">Frequency (kHz)</text><rect x="1718" y="363" width="8" height="1.3" fill="#0000ff"/><text x="1730.6" y="369" font-family="Liberation Sans" font-size="14.6" fill="#333">Data 0</text></svg>
<svg class="a" style="left:653px;top:246px" width="1170" height="698" viewBox="653 246 1170 698"><rect x="744" y="706.2" width="968" height="286" fill="#ffffff"/><rect x="744" y="706.2" width="2" height="286" fill="#c2c0bc"/><rect x="744" y="706.2" width="968" height="2" fill="#c2c0bc"/><g stroke="#8e8e8e" stroke-width="1" stroke-dasharray="4 2" fill="none"><path d="M746 752.5 H1711"/><path d="M746 790.5 H1711"/><path d="M746 829.5 H1711"/><path d="M746 868.5 H1711"/><path d="M746 907.5 H1711"/><path d="M746 946.5 H1711"/><path d="M746 985.5 H1711"/><path d="M750.5 708.2 V992.2"/><path d="M986.5 708.2 V992.2"/><path d="M1221.5 708.2 V992.2"/><path d="M1456.5 708.2 V992.2"/><path d="M1691.5 708.2 V992.2"/></g><clipPath id="c2"><rect x="746" y="708.2" width="966" height="283"/></clipPath><path clip-path="url(#c2)" d="M750.4 741.8 L751.9 779.5 L753.3 817.2 L754.8 854.9 L756.3 884.1 L757.8 886.1 L759.2 883.1 L760.7 883.1 L762.2 896.1 L763.6 923.9 L765.1 908.0 L766.6 882.7 L768.0 882.6 L769.5 876.6 L771.0 907.5 L772.4 888.8 L773.9 895.1 L775.4 884.2 L776.9 892.9 L778.3 872.0 L779.8 898.0 L781.3 892.9 L782.7 915.4 L784.2 862.4 L785.7 908.8 L787.1 878.9 L788.6 904.9 L790.1 896.2 L791.6 890.5 L793.0 878.6 L794.5 867.4 L796.0 846.2 L797.4 826.2 L798.9 844.9 L800.4 860.3 L801.9 877.2 L803.3 890.6 L804.8 893.7 L806.3 893.5 L807.7 900.0 L809.2 872.7 L810.7 884.7 L812.1 881.7 L813.6 915.4 L815.1 891.7 L816.5 908.9 L818.0 897.1 L819.5 930.8 L821.0 897.2 L822.4 876.0 L823.9 899.6 L825.4 890.5 L826.8 879.8 L828.3 895.0 L829.8 880.5 L831.2 912.7 L832.7 882.5 L834.2 883.5 L835.7 882.1 L837.1 874.8 L838.6 897.5 L840.1 880.0 L841.5 865.2 L843.0 849.8 L844.5 832.7 L845.9 852.9 L847.4 864.4 L848.9 883.0 L850.4 884.9 L851.8 877.6 L853.3 888.2 L854.8 894.5 L856.2 885.6 L857.7 887.4 L859.2 896.1 L860.6 909.7 L862.1 864.6 L863.6 889.5 L865.1 886.9 L866.5 881.7 L868.0 873.3 L869.5 898.3 L870.9 886.6 L872.4 891.5 L873.9 884.6 L875.3 903.0 L876.8 885.7 L878.3 895.9 L879.8 895.3 L881.2 882.0 L882.7 885.4 L884.2 883.5 L885.6 886.0 L887.1 874.2 L888.6 858.7 L890.0 840.9 L891.5 815.3 L893.0 835.8 L894.5 854.4 L895.9 877.8 L897.4 894.1 L898.9 879.7 L900.3 893.3 L901.8 920.9 L903.3 890.0 L904.8 871.0 L906.2 887.4 L907.7 889.6 L909.2 899.6 L910.6 927.9 L912.1 893.4 L913.6 890.5 L915.0 871.9 L916.5 886.5 L918.0 908.4 L919.4 899.0 L920.9 888.2 L922.4 898.2 L923.9 890.0 L925.3 871.9 L926.8 903.4 L928.3 885.5 L929.7 894.0 L931.2 908.9 L932.7 884.7 L934.1 883.5 L935.6 890.6 L937.1 881.3 L938.6 864.4 L940.0 898.3 L941.5 909.9 L943.0 932.3 L944.4 903.1 L945.9 900.8 L947.4 904.8 L948.8 901.7 L950.3 897.1 L951.8 932.1 L953.3 902.0 L954.7 896.5 L956.2 898.4 L957.7 908.0 L959.1 927.5 L960.6 907.6 L962.1 904.6 L963.5 899.8 L965.0 900.2 L966.5 936.9 L968.0 909.6 L969.4 899.0 L970.9 902.0 L972.4 896.5 L973.8 913.5 L975.3 897.9 L976.8 906.8 L978.2 886.6 L979.7 915.2 L981.2 922.5 L982.7 907.2 L984.1 903.3 L985.6 887.8 L987.1 890.7 L988.5 896.7 L990.0 909.5 L991.5 902.4 L992.9 912.7 L994.4 887.9 L995.9 887.8 L997.4 892.3 L998.8 908.1 L1000.3 891.4 L1001.8 899.0 L1003.2 889.8 L1004.7 903.4 L1006.2 925.2 L1007.6 893.2 L1009.1 907.7 L1010.6 919.4 L1012.1 905.6 L1013.5 896.4 L1015.0 900.1 L1016.5 889.1 L1017.9 909.5 L1019.4 913.8 L1020.9 913.8 L1022.3 877.4 L1023.8 903.1 L1025.3 903.6 L1026.8 912.0 L1028.2 891.4 L1029.7 878.4 L1031.2 856.7 L1032.6 835.3 L1034.1 852.5 L1035.6 875.3 L1037.0 897.2 L1038.5 901.5 L1040.0 903.3 L1041.5 904.3 L1042.9 894.9 L1044.4 898.1 L1045.9 903.0 L1047.3 926.8 L1048.8 915.5 L1050.3 899.5 L1051.8 903.8 L1053.2 904.3 L1054.7 901.7 L1056.2 922.5 L1057.6 903.1 L1059.1 887.6 L1060.6 904.3 L1062.0 890.5 L1063.5 886.9 L1065.0 888.0 L1066.4 899.8 L1067.9 902.1 L1069.4 891.4 L1070.9 903.4 L1072.3 895.4 L1073.8 903.6 L1075.3 946.0 L1076.7 904.9 L1078.2 890.4 L1079.7 910.9 L1081.2 926.7 L1082.6 901.2 L1084.1 903.1 L1085.6 896.5 L1087.0 901.1 L1088.5 901.9 L1090.0 885.9 L1091.4 886.8 L1092.9 903.6 L1094.4 892.7 L1095.8 908.9 L1097.3 906.1 L1098.8 897.3 L1100.3 900.1 L1101.7 894.9 L1103.2 904.2 L1104.7 898.1 L1106.1 893.0 L1107.6 896.4 L1109.1 913.6 L1110.5 944.4 L1112.0 905.9 L1113.5 901.2 L1115.0 946.0 L1116.4 894.1 L1117.9 893.8 L1119.4 903.2 L1120.8 905.8 L1122.3 894.1 L1123.8 871.6 L1125.2 854.2 L1126.7 842.5 L1128.2 859.0 L1129.7 874.0 L1131.1 898.2 L1132.6 910.4 L1134.1 894.4 L1135.5 893.6 L1137.0 893.6 L1138.5 899.8 L1139.9 894.2 L1141.4 923.3 L1142.9 893.7 L1144.4 899.0 L1145.8 901.1 L1147.3 934.5 L1148.8 899.3 L1150.2 893.0 L1151.7 917.8 L1153.2 897.2 L1154.7 898.0 L1156.1 887.5 L1157.6 906.8 L1159.1 942.8 L1160.5 898.3 L1162.0 889.6 L1163.5 925.5 L1164.9 924.2 L1166.4 912.3 L1167.9 909.4 L1169.3 906.0 L1170.8 893.5 L1172.3 900.9 L1173.8 913.3 L1175.2 916.7 L1176.7 901.0 L1178.2 877.7 L1179.6 890.5 L1181.1 899.9 L1182.6 902.0 L1184.0 887.6 L1185.5 893.1 L1187.0 899.6 L1188.5 896.1 L1189.9 885.6 L1191.4 894.5 L1192.9 877.7 L1194.3 900.6 L1195.8 894.8 L1197.3 891.0 L1198.8 904.7 L1200.2 913.4 L1201.7 894.5 L1203.2 906.5 L1204.6 897.4 L1206.1 898.3 L1207.6 900.4 L1209.0 890.1 L1210.5 911.5 L1212.0 904.3 L1213.4 896.2 L1214.9 887.9 L1216.4 898.7 L1217.9 922.4 L1219.3 896.5 L1220.8 902.6 L1222.3 908.6 L1223.7 918.0 L1225.2 893.7 L1226.7 897.2 L1228.2 904.0 L1229.6 904.1 L1231.1 920.2 L1232.6 913.7 L1234.0 946.0 L1235.5 907.9 L1237.0 891.8 L1238.4 910.5 L1239.9 884.0 L1241.4 908.9 L1242.8 944.6 L1244.3 895.8 L1245.8 931.0 L1247.3 930.4 L1248.7 903.6 L1250.2 907.3 L1251.7 897.3 L1253.1 900.4 L1254.6 891.9 L1256.1 905.4 L1257.5 919.9 L1259.0 911.1 L1260.5 926.8 L1262.0 896.9 L1263.4 887.6 L1264.9 905.1 L1266.4 917.1 L1267.8 900.8 L1269.3 925.4 L1270.8 894.3 L1272.2 894.9 L1273.7 917.9 L1275.2 896.3 L1276.7 907.1 L1278.1 901.9 L1279.6 911.6 L1281.1 898.9 L1282.5 905.3 L1284.0 890.4 L1285.5 898.8 L1286.9 900.9 L1288.4 904.9 L1289.9 924.7 L1291.4 895.1 L1292.8 909.3 L1294.3 900.4 L1295.8 914.9 L1297.2 903.1 L1298.7 908.7 L1300.2 905.4 L1301.7 898.5 L1303.1 907.6 L1304.6 894.6 L1306.1 899.0 L1307.5 906.7 L1309.0 909.7 L1310.5 901.4 L1311.9 903.3 L1313.4 905.6 L1314.9 909.9 L1316.3 910.4 L1317.8 913.7 L1319.3 903.2 L1320.8 911.9 L1322.2 896.1 L1323.7 886.5 L1325.2 931.0 L1326.6 940.9 L1328.1 913.5 L1329.6 903.2 L1331.0 915.9 L1332.5 906.4 L1334.0 905.9 L1335.5 903.8 L1336.9 909.4 L1338.4 912.5 L1339.9 907.4 L1341.3 903.2 L1342.8 909.3 L1344.3 934.9 L1345.8 908.5 L1347.2 910.3 L1348.7 906.9 L1350.2 896.5 L1351.6 914.6 L1353.1 905.8 L1354.6 913.7 L1356.0 912.5 L1357.5 900.6 L1359.0 890.7 L1360.4 874.0 L1361.9 853.7 L1363.4 875.8 L1364.9 894.1 L1366.3 911.7 L1367.8 928.3 L1369.3 906.8 L1370.7 917.4 L1372.2 933.4 L1373.7 928.5 L1375.2 909.9 L1376.6 936.2 L1378.1 928.8 L1379.6 918.3 L1381.0 902.4 L1382.5 908.8 L1384.0 909.2 L1385.4 924.3 L1386.9 930.6 L1388.4 906.1 L1389.8 922.0 L1391.3 928.2 L1392.8 896.5 L1394.3 890.5 L1395.7 900.4 L1397.2 898.6 L1398.7 908.1 L1400.1 912.1 L1401.6 895.6 L1403.1 888.6 L1404.5 923.3 L1406.0 893.0 L1407.5 919.3 L1409.0 892.6 L1410.4 904.0 L1411.9 910.2 L1413.4 920.4 L1414.8 897.0 L1416.3 915.1 L1417.8 911.4 L1419.2 931.2 L1420.7 893.4 L1422.2 924.5 L1423.7 927.9 L1425.1 922.6 L1426.6 906.7 L1428.1 917.5 L1429.5 919.6 L1431.0 928.4 L1432.5 928.9 L1433.9 905.3 L1435.4 895.0 L1436.9 946.0 L1438.4 914.7 L1439.8 904.8 L1441.3 903.9 L1442.8 905.3 L1444.2 943.3 L1445.7 915.3 L1447.2 910.6 L1448.7 893.2 L1450.1 904.9 L1451.6 911.5 L1453.1 895.0 L1454.5 876.4 L1456.0 860.7 L1457.5 875.7 L1458.9 888.5 L1460.4 907.5 L1461.9 907.6 L1463.3 930.7 L1464.8 899.1 L1466.3 905.2 L1467.8 898.9 L1469.2 919.4 L1470.7 922.4 L1472.2 900.8 L1473.6 922.4 L1475.1 926.1 L1476.6 900.0 L1478.0 906.6 L1479.5 892.7 L1481.0 912.5 L1482.5 910.5 L1483.9 901.2 L1485.4 912.1 L1486.9 920.2 L1488.3 899.5 L1489.8 919.5 L1491.3 909.2 L1492.8 919.2 L1494.2 909.9 L1495.7 909.9 L1497.2 882.9 L1498.6 885.3 L1500.1 912.8 L1501.6 892.3 L1503.0 878.2 L1504.5 869.1 L1506.0 873.7 L1507.4 883.1 L1508.9 884.8 L1510.4 881.8 L1511.9 871.4 L1513.3 874.6 L1514.8 881.1 L1516.3 891.7 L1517.7 902.0 L1519.2 881.7 L1520.7 869.4 L1522.2 887.9 L1523.6 885.6 L1525.1 926.1 L1526.6 885.2 L1528.0 891.6 L1529.5 907.0 L1531.0 900.1 L1532.4 909.9 L1533.9 911.8 L1535.4 937.3 L1536.8 912.6 L1538.3 922.8 L1539.8 914.9 L1541.3 934.2 L1542.7 901.0 L1544.2 906.3 L1545.7 886.4 L1547.1 864.5 L1548.6 844.0 L1550.1 832.1 L1551.5 855.1 L1553.0 880.1 L1554.5 899.3 L1556.0 896.7 L1557.4 884.4 L1558.9 891.6 L1560.4 890.6 L1561.8 897.3 L1563.3 894.1 L1564.8 917.8 L1566.2 915.8 L1567.7 882.6 L1569.2 881.1 L1570.7 888.1 L1572.1 878.9 L1573.6 889.3 L1575.1 885.1 L1576.5 877.7 L1578.0 889.3 L1579.5 870.1 L1580.9 874.4 L1582.4 878.5 L1583.9 878.0 L1585.4 880.0 L1586.8 884.6 L1588.3 876.4 L1589.8 878.9 L1591.2 904.7 L1592.7 907.7 L1594.2 902.8 L1595.7 946.0 L1597.1 921.6 L1598.6 911.0 L1600.1 901.8 L1601.5 917.2 L1603.0 903.7 L1604.5 893.5 L1605.9 887.9 L1607.4 906.6 L1608.9 908.5 L1610.3 906.3 L1611.8 910.0 L1613.3 915.5 L1614.8 908.4 L1616.2 929.4 L1617.7 904.3 L1619.2 945.9 L1620.6 902.4 L1622.1 919.6 L1623.6 903.6 L1625.0 883.4 L1626.5 900.1 L1628.0 922.9 L1629.5 911.9 L1630.9 908.7 L1632.4 884.9 L1633.9 891.7 L1635.3 914.5 L1636.8 883.2 L1638.3 886.9 L1639.8 883.4 L1641.2 881.4 L1642.7 878.7 L1644.2 879.1 L1645.6 885.7 L1647.1 880.0 L1648.6 881.3 L1650.0 886.0 L1651.5 903.0 L1653.0 911.3 L1654.4 925.2 L1655.9 900.0 L1657.4 906.7 L1658.9 924.7 L1660.3 900.6 L1661.8 898.7 L1663.3 906.5 L1664.7 908.1 L1666.2 920.0 L1667.7 912.5 L1669.2 946.0 L1670.6 895.6 L1672.1 894.6 L1673.6 905.0 L1675.0 920.0 L1676.5 884.1 L1678.0 905.3 L1679.4 908.7 L1680.9 917.1 L1682.4 891.5 L1683.8 923.1 L1685.3 909.8 L1686.8 917.7 L1688.3 901.7 L1689.7 902.8 L1691.2 915.6" fill="none" stroke="#0000ff" stroke-width="1" stroke-linejoin="miter" shape-rendering="crispEdges"/><path d="M746 713.5 H1711" stroke="#00e8f0" stroke-width="1.2"/><path d="M747 713.5 H1711" stroke="#6a0000" stroke-width="1" stroke-dasharray="1 2"/><g stroke="#3a3a3a" stroke-width="1" fill="none" shape-rendering="crispEdges"><path d="M741.5 712.5999999999999 V985.1099999999999"/><path d="M732.5 713.5 H741.5"/><path d="M736.5 722.5 H741.5"/><path d="M734.5 732.5 H741.5"/><path d="M736.5 742.5 H741.5"/><path d="M732.5 752.5 H741.5"/><path d="M736.5 761.5 H741.5"/><path d="M734.5 771.5 H741.5"/><path d="M736.5 781.5 H741.5"/><path d="M732.5 790.5 H741.5"/><path d="M736.5 800.5 H741.5"/><path d="M734.5 810.5 H741.5"/><path d="M736.5 820.5 H741.5"/><path d="M732.5 829.5 H741.5"/><path d="M736.5 839.5 H741.5"/><path d="M734.5 849.5 H741.5"/><path d="M736.5 859.5 H741.5"/><path d="M732.5 868.5 H741.5"/><path d="M736.5 878.5 H741.5"/><path d="M734.5 888.5 H741.5"/><path d="M736.5 898.5 H741.5"/><path d="M732.5 907.5 H741.5"/><path d="M736.5 917.5 H741.5"/><path d="M734.5 927.5 H741.5"/><path d="M736.5 936.5 H741.5"/><path d="M732.5 946.5 H741.5"/><path d="M736.5 956.5 H741.5"/><path d="M734.5 966.5 H741.5"/><path d="M736.5 975.5 H741.5"/><path d="M732.5 985.5 H741.5"/></g><g font-family="Liberation Sans" font-size="12.6" fill="#3a3a3a" text-anchor="end"><text x="727" y="717.2">0</text><text x="727" y="756.1">-20</text><text x="727" y="795.1">-40</text><text x="727" y="834.0">-60</text><text x="727" y="872.9">-80</text><text x="727" y="911.8">-100</text><text x="727" y="950.8">-120</text><text x="727" y="989.7">-140</text></g><text x="0" y="0" transform="translate(696 847.2) rotate(-90)" font-family="Liberation Sans" font-weight="bold" font-size="15.9" fill="#333" text-anchor="middle">Power (dB)</text><g stroke="#3a3a3a" stroke-width="1" fill="none" shape-rendering="crispEdges"><path d="M750 994.7 H1692"/><path d="M750.5 995.2 V1003.2"/><path d="M797.5 995.2 V999.2"/><path d="M844.5 995.2 V999.2"/><path d="M892.5 995.2 V999.2"/><path d="M939.5 995.2 V999.2"/><path d="M986.5 995.2 V1003.2"/><path d="M1033.5 995.2 V999.2"/><path d="M1080.5 995.2 V999.2"/><path d="M1127.5 995.2 V999.2"/><path d="M1174.5 995.2 V999.2"/><path d="M1221.5 995.2 V1003.2"/><path d="M1268.5 995.2 V999.2"/><path d="M1315.5 995.2 V999.2"/><path d="M1362.5 995.2 V999.2"/><path d="M1409.5 995.2 V999.2"/><path d="M1456.5 995.2 V1003.2"/><path d="M1503.5 995.2 V999.2"/><path d="M1550.5 995.2 V999.2"/><path d="M1597.5 995.2 V999.2"/><path d="M1644.5 995.2 V999.2"/><path d="M1691.5 995.2 V1003.2"/></g><g font-family="Liberation Sans" font-size="12.4" fill="#3a3a3a" text-anchor="middle"><text x="750.4" y="1017.0">0.00</text><text x="985.6" y="1017.0">50.00</text><text x="1220.8" y="1017.0">100.00</text><text x="1456.0" y="1017.0">150.00</text><text x="1691.2" y="1017.0">200.00</text></g><text x="1220" y="1033.8" font-family="Liberation Sans" font-weight="bold" font-size="15.8" fill="#333" text-anchor="middle">Frequency (kHz)</text><rect x="1718" y="718.2" width="8" height="1.3" fill="#0000ff"/><text x="1730.6" y="724.2" font-family="Liberation Sans" font-size="14.6" fill="#333">Data 0</text></svg>
<svg class="a" style="left:1666px;top:955.5px" width="167" height="33" viewBox="-2 -2 167 33"><g fill="#ffffff" stroke="#ffffff" stroke-width="3" stroke-linejoin="round"><g transform="translate(0 0)"><rect x="0" y="0.5" width="15" height="3.7"/><rect x="0" y="6" width="3.8" height="22"/><rect x="5.2" y="8" width="8.5" height="3.3000000000000007"/><rect x="5.2" y="8" width="3.3" height="19.8"/><rect x="10.4" y="8" width="3.299999999999999" height="19.8"/><rect x="5.2" y="24.5" width="8.5" height="3.3000000000000007"/><rect x="19.3" y="0" width="3.6999999999999993" height="3.8"/><rect x="15" y="3.8" width="13.3" height="3.7"/><rect x="15" y="7.5" width="4.300000000000001" height="16.5"/><polygon points="15,24 19.3,24 17,28 13,28"/></g><g transform="translate(31.6 0)"><rect x="0" y="0.5" width="28.3" height="3.7"/><rect x="0" y="4.2" width="4.7" height="24.1"/><rect x="7.5" y="10.4" width="20.8" height="4.1"/><rect x="7.5" y="10.4" width="4.300000000000001" height="17.9"/><rect x="24" y="10.4" width="4.300000000000001" height="17.9"/><rect x="7.5" y="24.5" width="20.8" height="3.8000000000000007"/></g><g transform="translate(63.7 0)"><rect x="1" y="0.5" width="4.2" height="23.1"/><rect x="9.4" y="0.5" width="4.299999999999999" height="27.8"/><polygon points="1,19.8 9.4,18.5 9.4,22.5 1,24"/><rect x="14" y="3.8" width="13.399999999999999" height="3.7"/><polygon points="16,0 20,0 18.5,3.8 14.5,3.8"/><polygon points="16.5,7.5 20.5,7.5 27.5,28.3 23.5,28.3"/><polygon points="22.5,7.5 26.5,7.5 18.5,28.3 14.5,28.3"/></g><g transform="translate(94.8 0)"><rect x="10.4" y="0" width="5.6" height="3.3"/><rect x="1.9" y="3.3" width="24.5" height="3.3"/><rect x="5.6" y="6.6" width="3.4000000000000004" height="2.8000000000000007"/><rect x="19.4" y="6.6" width="3.400000000000002" height="2.8000000000000007"/><rect x="0" y="9.4" width="28.3" height="3.299999999999999"/><rect x="1.9" y="15" width="24.5" height="3.3000000000000007"/><rect x="1.9" y="15" width="3.6" height="13.3"/><rect x="22.8" y="15" width="3.599999999999998" height="13.3"/><rect x="1.9" y="24.8" width="24.5" height="3.5"/><rect x="1.9" y="19.8" width="24.5" height="2.8000000000000007"/></g><g transform="translate(126 0)"><rect x="3.3" y="0.5" width="3.7" height="27.8"/><rect x="0" y="6.6" width="10.4" height="3.8000000000000007"/><polygon points="0.5,10.4 3.3,10.4 3.3,23.6 0.5,23.6"/><rect x="11.3" y="1.4" width="4.299999999999999" height="23.6"/><polygon points="11.3,24 15.6,24 14,28.3 10,28.3"/><rect x="11.3" y="1" width="13.2" height="3.7"/><rect x="20.8" y="4.7" width="3.6999999999999993" height="23.6"/><rect x="20.8" y="24.6" width="8.399999999999999" height="3.6999999999999993"/></g></g><g fill="#0d3f7a"><g transform="translate(0 0)"><rect x="0" y="0.5" width="15" height="3.7"/><rect x="0" y="6" width="3.8" height="22"/><rect x="5.2" y="8" width="8.5" height="3.3000000000000007"/><rect x="5.2" y="8" width="3.3" height="19.8"/><rect x="10.4" y="8" width="3.299999999999999" height="19.8"/><rect x="5.2" y="24.5" width="8.5" height="3.3000000000000007"/><rect x="19.3" y="0" width="3.6999999999999993" height="3.8"/><rect x="15" y="3.8" width="13.3" height="3.7"/><rect x="15" y="7.5" width="4.300000000000001" height="16.5"/><polygon points="15,24 19.3,24 17,28 13,28"/></g><g transform="translate(31.6 0)"><rect x="0" y="0.5" width="28.3" height="3.7"/><rect x="0" y="4.2" width="4.7" height="24.1"/><rect x="7.5" y="10.4" width="20.8" height="4.1"/><rect x="7.5" y="10.4" width="4.300000000000001" height="17.9"/><rect x="24" y="10.4" width="4.300000000000001" height="17.9"/><rect x="7.5" y="24.5" width="20.8" height="3.8000000000000007"/></g><g transform="translate(63.7 0)"><rect x="1" y="0.5" width="4.2" height="23.1"/><rect x="9.4" y="0.5" width="4.299999999999999" height="27.8"/><polygon points="1,19.8 9.4,18.5 9.4,22.5 1,24"/><rect x="14" y="3.8" width="13.399999999999999" height="3.7"/><polygon points="16,0 20,0 18.5,3.8 14.5,3.8"/><polygon points="16.5,7.5 20.5,7.5 27.5,28.3 23.5,28.3"/><polygon points="22.5,7.5 26.5,7.5 18.5,28.3 14.5,28.3"/></g><g transform="translate(94.8 0)"><rect x="10.4" y="0" width="5.6" height="3.3"/><rect x="1.9" y="3.3" width="24.5" height="3.3"/><rect x="5.6" y="6.6" width="3.4000000000000004" height="2.8000000000000007"/><rect x="19.4" y="6.6" width="3.400000000000002" height="2.8000000000000007"/><rect x="0" y="9.4" width="28.3" height="3.299999999999999"/><rect x="1.9" y="15" width="24.5" height="3.3000000000000007"/><rect x="1.9" y="15" width="3.6" height="13.3"/><rect x="22.8" y="15" width="3.599999999999998" height="13.3"/><rect x="1.9" y="24.8" width="24.5" height="3.5"/><rect x="1.9" y="19.8" width="24.5" height="2.8000000000000007"/></g><g transform="translate(126 0)"><rect x="3.3" y="0.5" width="3.7" height="27.8"/><rect x="0" y="6.6" width="10.4" height="3.8000000000000007"/><polygon points="0.5,10.4 3.3,10.4 3.3,23.6 0.5,23.6"/><rect x="11.3" y="1.4" width="4.299999999999999" height="23.6"/><polygon points="11.3,24 15.6,24 14,28.3 10,28.3"/><rect x="11.3" y="1" width="13.2" height="3.7"/><rect x="20.8" y="4.7" width="3.6999999999999993" height="23.6"/><rect x="20.8" y="24.6" width="8.399999999999999" height="3.6999999999999993"/></g></g></svg>
<div class="a" style="left:1667.5px;top:993.6px;font-size:17px;line-height:16px;font-weight:bold;color:#0d3f7a;letter-spacing:-0.5px;white-space:nowrap;text-shadow:0 0 2px #fff,0 0 1px #fff">www.crystalradio.cn</div>
<div class="a" style="left:-4px;top:40px;width:126px;height:26px;border-radius:4px;background:linear-gradient(#1f1f1f,#3a3a3a);box-shadow:0 1px 3px rgba(0,0,0,0.4)"></div>
<svg class="a" style="left:0;top:0" width="125" height="66"><g fill="none" stroke="#ffffff" stroke-width="1.5"><path transform="translate(6.80 46)" d="M1 4h4 M3 1v11 l-1.2 -1 M1 9l4 -2 M7 1.5h5v4.5h-5z M9.5 1.5v4.5 M7 7.5h5 l-5 5 M7 8.5l5 4"/><path transform="translate(21.65 46)" d="M1 2h11 M6.5 0v4 M1 5.5v-1.5h11v1.5 M4.5 5.5l2.5 2l-3 2h5 M6.5 9.5v3.5 M3.5 11l-2 2 M9.5 11l2 2"/><path transform="translate(36.50 46)" d="M2.5 0.5l-2 4 M1.5 3v4 M4 2h7l-1 2 M7.5 3v4.5 M5 5l-1 2 M10 5l1 2 M1 9v3.5h9v-2 M4.5 8l1 2 M7.5 8l1 2 M11 8l1.5 2"/><path transform="translate(51.35 46)" d="M1 3h5v9h-5z M1 7.5h5 M3.5 0l-1 3 M8.5 0.5l-1 3 M7.5 3h4.5v8.5l-1.5 1.5 M8.5 6l1.5 2"/><path transform="translate(66.20 46)" d="M1 1l1.5 1.5 M0.5 5h2.5v6.5l1.5-1.5 M5 5.5h8 M9 0.5v12.5"/><path transform="translate(81.05 46)" d="M2.5 0l-1.5 2.5 M2 1.2h3 M8.5 0l-1.5 2.5 M8 1.2h4 M3 3.5h7v5h-7z M3 5.2h7 M3 6.9h7 M1 10h11 M4.8 8.5v4.5 M8.5 8.5v4.5"/><path transform="translate(95.90 46)" d="M0.5 4h5 M3 0.5v12.5 M3 5l-2.5 4.5 M3 5.5l2.5 2 M7 1.5h3v9.5l1.5 1.5h1v-2.5 M7 1.5v7l-1.8 4"/></g></svg>
</body></html>
